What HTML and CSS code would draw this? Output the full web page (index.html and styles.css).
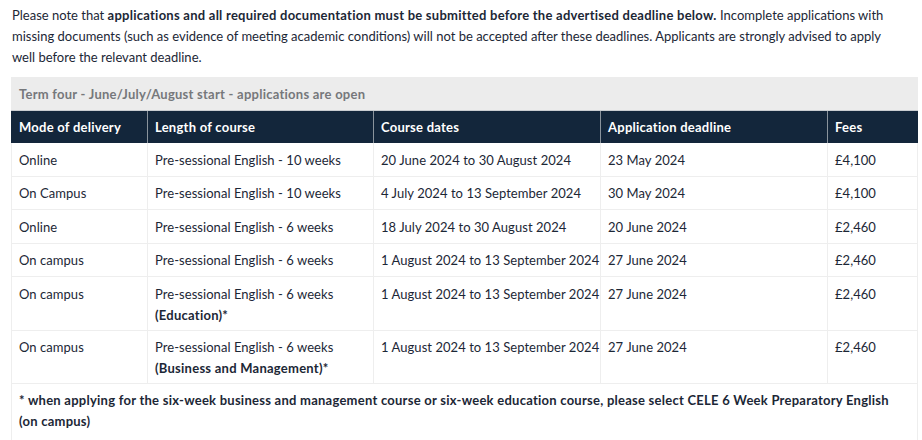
FILE: index.html
```html
<!DOCTYPE html>
<html lang="en">
<head>
<meta charset="utf-8">
<title>Pre-sessional English term four</title>
<link rel="stylesheet" href="styles.css">
</head>
<body>
<main class="page">
  <p class="intro">Please note that <strong>applications and all required documentation must be submitted before the advertised deadline below.</strong> Incomplete applications with missing documents (such as evidence of meeting academic conditions) will not be accepted after these deadlines. Applicants are strongly advised to apply well before the relevant deadline.</p>
  <table class="courses">
    <colgroup>
      <col class="c1"><col class="c2"><col class="c3"><col class="c4"><col class="c5">
    </colgroup>
    <thead>
      <tr class="term"><th colspan="5">Term four - June/July/August start - applications are open</th></tr>
      <tr class="head">
        <th>Mode of delivery</th>
        <th>Length of course</th>
        <th>Course dates</th>
        <th>Application deadline</th>
        <th>Fees</th>
      </tr>
    </thead>
    <tbody>
      <tr><td>Online</td><td>Pre-sessional English - 10 weeks</td><td class="dates">20 June 2024 to 30 August 2024</td><td>23 May 2024</td><td>£4,100</td></tr>
      <tr><td>On Campus</td><td>Pre-sessional English - 10 weeks</td><td class="dates">4 July 2024 to 13 September 2024</td><td>30 May 2024</td><td>£4,100</td></tr>
      <tr><td>Online</td><td>Pre-sessional English - 6 weeks</td><td class="dates">18 July 2024 to 30 August 2024</td><td>20 June 2024</td><td>£2,460</td></tr>
      <tr><td>On campus</td><td>Pre-sessional English - 6 weeks</td><td class="dates">1 August 2024 to 13 September 2024</td><td>27 June 2024</td><td>£2,460</td></tr>
      <tr class="tall"><td>On campus</td><td>Pre-sessional English - 6 weeks<br><strong>(Education)*</strong></td><td class="dates">1 August 2024 to 13 September 2024</td><td>27 June 2024</td><td>£2,460</td></tr>
      <tr class="tall"><td>On campus</td><td>Pre-sessional English - 6 weeks<br><strong>(Business and Management)*</strong></td><td class="dates">1 August 2024 to 13 September 2024</td><td>27 June 2024</td><td>£2,460</td></tr>
      <tr class="note"><td colspan="5"><strong>* when applying for the six-week business and management course or six-week education course, please select CELE 6 Week Preparatory English (on campus)</strong></td></tr>
    </tbody>
  </table>
</main>
</body>
</html>
```
FILE: styles.css
```css
html, body {
  margin: 0;
  padding: 0;
  background: #ffffff;
}
body {
  font-family: Lato, "Open Sans", sans-serif;
  font-size: 13px;
  line-height: 21px;
  color: #1c2736;
}
.page {
  padding: 5px 5px 0 11px;
}
.intro {
  margin: 0 0 9px 1px;
  width: 890px;
}
strong, th {
  font-weight: 700;
  letter-spacing: 0.25px;
}
.courses {
  width: 906px;
  border-collapse: collapse;
  table-layout: fixed;
}
.c1 { width: 136px; }
.c2 { width: 226px; }
.c3 { width: 227px; }
.c4 { width: 227px; }
.c5 { width: 90px; }
.courses th, .courses td {
  text-align: left;
  vertical-align: top;
  padding: 6px 7px 5px;
}
.courses td {
  letter-spacing: 0.05px;
  padding: 6.5px 7px 5px;
}
.courses td.dates {
  white-space: nowrap;
  padding-right: 2px;
}
.term th {
  background: #ececec;
  color: #76787b;
  border: 1px solid #ececec;
  border-bottom: 1px solid #c9ccd0;
}
.head th {
  background: #13263b;
  color: #ffffff;
  border-left: 1px solid #8a939c;
  border-right: 1px solid #8a939c;
}
.head th:first-child { border-left-color: #13263b; }
.head th:last-child { border-right-color: #13263b; }
.courses td {
  border: 1px solid #eeeeee;
  border-top: 0;
}
.courses tr.tall td {
  padding-bottom: 4px;
}
.courses tr.note td {
  padding: 6px 7px 10px;
}
```
